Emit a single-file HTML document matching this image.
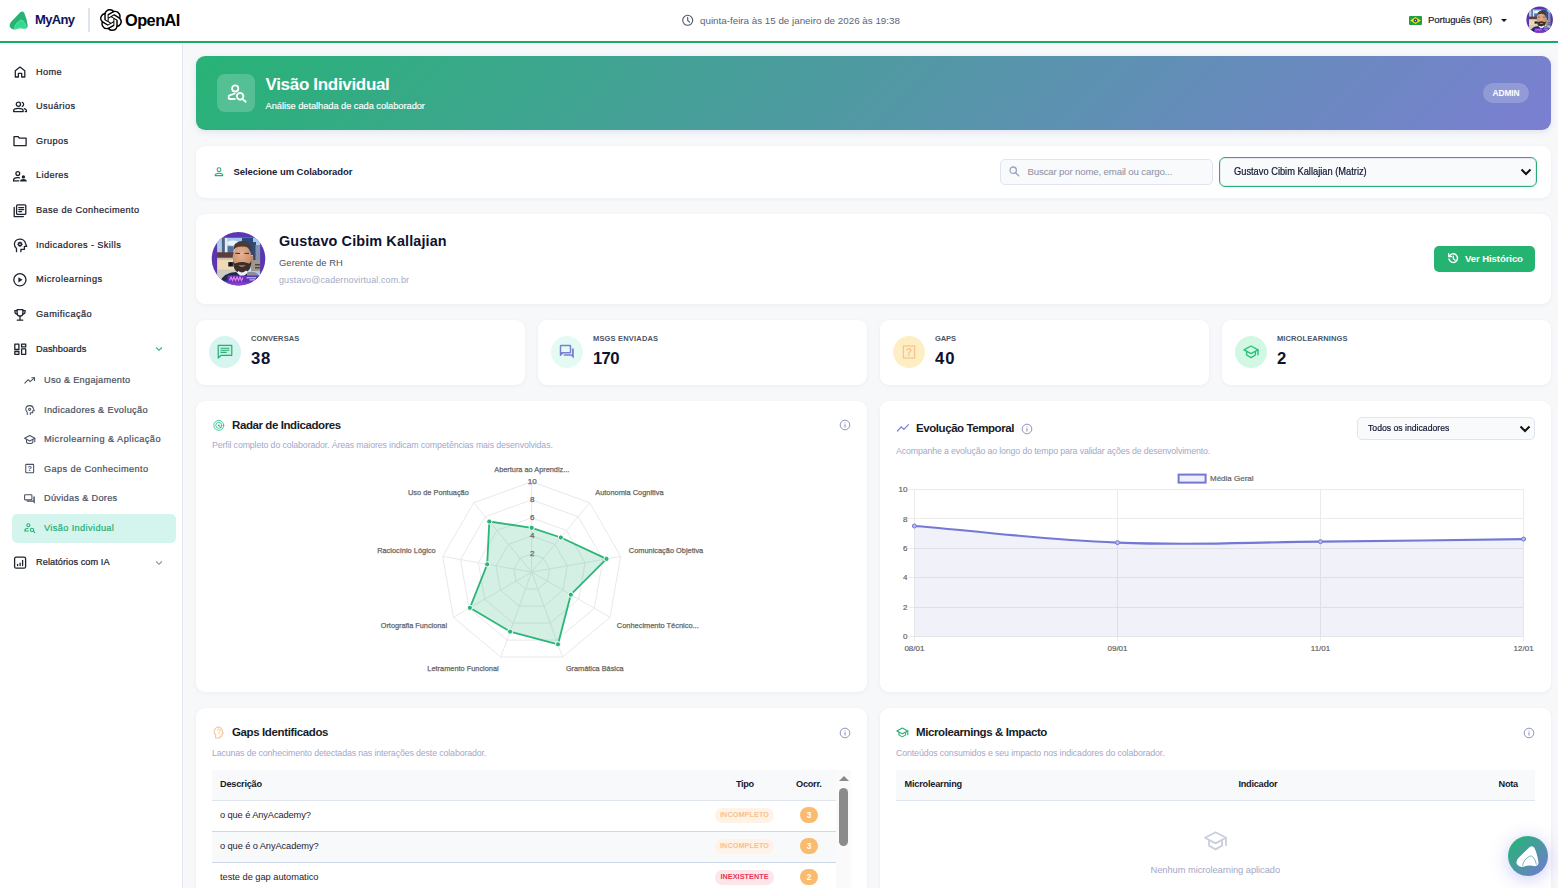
<!DOCTYPE html>
<html lang="pt-BR">
<head>
<meta charset="utf-8">
<title>Visão Individual</title>
<style>
*{box-sizing:border-box;margin:0;padding:0}
html,body{width:1558px;height:888px;overflow:hidden}
body{font-family:"Liberation Sans",sans-serif;background:#f7f8fa;color:#1e2330;position:relative;font-size:11px}
.abs{position:absolute}
/* top bar */
#topbar{position:absolute;z-index:2;left:0;top:0;width:1558px;height:44px;background:#fff;box-shadow:inset 0 -1px 0 #fff,inset 0 -3px 0 #14ad64}
/* sidebar */
#sidebar{position:absolute;left:0;top:43px;width:183px;height:845px;background:#fff;border-right:1px solid #e3e7ef}
.nav{position:absolute;left:0;width:182px;height:20px}
.nav svg{position:absolute}
.nav span{position:absolute;left:36px;top:-.5px;line-height:20px;font-size:9.200px;color:#1e2330;white-space:nowrap;letter-spacing:.4px;-webkit-text-stroke-width:.22px}
.nav.sub span{left:44px;color:#4b5262}
.card{position:absolute;background:#fff;border-radius:9px;box-shadow:0 1px 4px rgba(30,40,80,.05)}
.ctitle{position:absolute;font-weight:bold;font-size:12.3px;color:#171c28;white-space:nowrap}
.csub{position:absolute;font-size:8.6px;color:#a3a7cc;white-space:nowrap}
</style>
</head>
<body>
<div id="topbar">
  <!-- MyAny logo -->
  <svg class="abs" style="left:6px;top:6px" width="30" height="30" viewBox="0 0 30 30">
    <path d="M14.3 6.3 Q16.6 4.3 18.3 6.9 Q20.6 11.8 21.7 19.6 Q21.9 22.6 18.6 23 Q14.4 21.4 10 23.3 Q6.4 24.4 4.2 21.6 Q2.7 18.9 5.2 15.8 Z" fill="#27b374"/>
    <path d="M8.4 21.7 Q9.6 17 14.4 14.2 Q16 13.6 17.3 15 Q19.6 17.8 20 20.6 Q19.9 22.7 18 22.7 Q14.4 21.2 10.2 23 Q8.2 23.3 8.4 21.7 Z" fill="#2edc8c" stroke="#9eeccb" stroke-width=".5"/>
  </svg>
  <div class="abs" style="left:35px;top:12px;font-size:13px;line-height:16px;font-weight:bold;color:#0f0f5e;letter-spacing:-.65px">MyAny</div>
  <div class="abs" style="left:88px;top:8px;width:2px;height:24px;background:#dde4f0"></div>
  <!-- OpenAI -->
  <svg class="abs" style="left:100px;top:9px" width="22" height="22" viewBox="0 0 24 24"><path fill="#000" d="M22.2819 9.8211a5.9847 5.9847 0 0 0-.5157-4.9108 6.0462 6.0462 0 0 0-6.5098-2.9A6.0651 6.0651 0 0 0 4.9807 4.1818a5.9847 5.9847 0 0 0-3.9977 2.9 6.0462 6.0462 0 0 0 .7427 7.0966 5.98 5.98 0 0 0 .511 4.9107 6.051 6.051 0 0 0 6.5146 2.9001A5.9847 5.9847 0 0 0 13.2599 24a6.0557 6.0557 0 0 0 5.7718-4.2058 5.9894 5.9894 0 0 0 3.9977-2.9001 6.0557 6.0557 0 0 0-.7475-7.0729zm-9.022 12.6081a4.4755 4.4755 0 0 1-2.8764-1.0408l.1419-.0804 4.7783-2.7582a.7948.7948 0 0 0 .3927-.6813v-6.7369l2.02 1.1686a.071.071 0 0 1 .038.052v5.5826a4.504 4.504 0 0 1-4.4945 4.4944zm-9.6607-4.1254a4.4708 4.4708 0 0 1-.5346-3.0137l.142.0852 4.783 2.7582a.7712.7712 0 0 0 .7806 0l5.8428-3.3685v2.3324a.0804.0804 0 0 1-.0332.0615L9.74 19.9502a4.4992 4.4992 0 0 1-6.1408-1.6464zM2.3408 7.8956a4.485 4.485 0 0 1 2.3655-1.9728V11.6a.7664.7664 0 0 0 .3879.6765l5.8144 3.3543-2.0201 1.1685a.0757.0757 0 0 1-.071 0l-4.8303-2.7865A4.504 4.504 0 0 1 2.3408 7.872zm16.5963 3.8558L13.1038 8.364 15.1192 7.2a.0757.0757 0 0 1 .071 0l4.8303 2.7913a4.4944 4.4944 0 0 1-.6765 8.1042v-5.6772a.79.79 0 0 0-.407-.667zm2.0107-3.0231l-.142-.0852-4.7735-2.7818a.7759.7759 0 0 0-.7854 0L9.409 9.2297V6.8974a.0662.0662 0 0 1 .0284-.0615l4.8303-2.7866a4.4992 4.4992 0 0 1 6.6802 4.66zM8.3065 12.863l-2.02-1.1638a.0804.0804 0 0 1-.038-.0567V6.0742a4.4992 4.4992 0 0 1 7.3757-3.4537l-.142.0805L8.704 5.459a.7948.7948 0 0 0-.3927.6813zm1.0976-2.3654l2.602-1.4998 2.6069 1.4998v2.9994l-2.5974 1.4997-2.6067-1.4997Z"/></svg>
  <div class="abs" style="left:125px;top:10px;font-size:16.3px;line-height:20px;font-weight:bold;color:#000;letter-spacing:-.5px">OpenAI</div>
  <!-- clock + date -->
  <svg class="abs" style="left:681px;top:14px" width="13" height="13" viewBox="0 0 13 13" fill="none" stroke="#4b5567" stroke-width="1.1" stroke-linecap="round"><circle cx="6.7" cy="6.3" r="5"/><path d="M6.7 3.4V6.5L8.6 8.2"/></svg>
  <div class="abs" style="left:700px;top:13.600px;font-size:9.800px;line-height:13px;color:#5b6577;letter-spacing:0;white-space:nowrap">quinta-feira às 15 de janeiro de 2026 às 19:38</div>
  <!-- flag -->
  <svg class="abs" style="left:1409px;top:16px" width="13" height="9" viewBox="0 0 13 9"><rect width="13" height="9" rx="1" fill="#229e45"/><path d="M6.5 1 L11.8 4.5 L6.5 8 L1.2 4.5Z" fill="#f8e509"/><circle cx="6.5" cy="4.5" r="1.9" fill="#2b49a3"/><circle cx="6.5" cy="4.5" r=".6" fill="#fff"/></svg>
  <div class="abs" style="left:1428px;top:12.500px;font-size:9.600px;line-height:13px;color:#1a1f36;letter-spacing:-.15px;-webkit-text-stroke-width:.2px;white-space:nowrap">Português (BR)</div>
  <svg class="abs" style="left:1501px;top:18.5px" width="6" height="3" viewBox="0 0 6 3"><path d="M0 0H6L3 3Z" fill="#111"/></svg>
  <!-- avatar -->
  <svg class="abs" style="left:1526.400px;top:5.700px" width="27.800" height="27.800" viewBox="0 0 56 56"><use href="#avg"/></svg>
</div>
<div id="sidebar">
<div class="nav" style="top:19px"><svg viewBox="0 0 16 16" style="left:12px;top:2px;width:16px;height:16px"><path fill="none" stroke="#1e2330" stroke-width="1.3" stroke-linejoin="round" stroke-linecap="round" d="M3.3 13V6.8L8 3.1L12.8 6.8V13H9.7V9.3H6.4V13Z"/></svg><span style="letter-spacing:0.379px">Home</span></div>
<div class="nav" style="top:53.5px"><svg viewBox="0 0 16 16" style="left:12px;top:2px;width:16px;height:16px"><g fill="none" stroke="#1e2330" stroke-width="1.3" stroke-linejoin="round" stroke-linecap="round"><circle cx="6.4" cy="5.3" r="2.1"/><path d="M1.6 12.6v-.7c0-1.7 2.6-2.6 4.8-2.6s4.8.9 4.8 2.6v.7z"/><path d="M10.2 3.3a2.1 2.1 0 0 1 0 4"/><path d="M12.3 9.7c1.3.4 2.2 1.1 2.2 2.2v.7h-1.2"/></g></svg><span style="letter-spacing:0.405px">Usuários</span></div>
<div class="nav" style="top:88px"><svg viewBox="0 0 16 16" style="left:12px;top:2px;width:16px;height:16px"><path fill="none" stroke="#1e2330" stroke-width="1.3" stroke-linejoin="round" stroke-linecap="round" d="M2 3.7h4.2l1.4 1.5h6.5v7.4H2z"/></svg><span style="letter-spacing:0.372px">Grupos</span></div>
<div class="nav" style="top:122.5px"><svg viewBox="0 0 16 16" style="left:12px;top:2px;width:16px;height:16px"><g fill="none" stroke="#1e2330" stroke-width="1.3" stroke-linejoin="round" stroke-linecap="round"><circle cx="5.8" cy="5.6" r="1.9"/><path d="M1.6 12.8v-.8c0-1.6 2.2-2.4 4.2-2.4 .6 0 1.2.1 1.7.2"/><path d="M1.6 12.8h5.2"/></g><circle cx="11.4" cy="8.9" r="1.7" fill="#1e2330"/><path d="M8 13.4c0-1.6 1.6-2.4 3.4-2.4s3.4.8 3.4 2.4z" fill="#1e2330"/></svg><span style="letter-spacing:0.377px">Lideres</span></div>
<div class="nav" style="top:157.5px"><svg viewBox="0 0 16 16" style="left:12px;top:2px;width:16px;height:16px"><g fill="none" stroke="#1e2330" stroke-width="1.3" stroke-linejoin="round" stroke-linecap="round"><rect x="4.6" y="1.8" width="9.2" height="9.6" rx="1"/><path d="M6.8 4.6h4.8M6.8 6.6h4.8M6.8 8.6h2.8"/><path d="M2.2 4.4v9.2h9.2"/></g></svg><span style="letter-spacing:0.394px">Base de Conhecimento</span></div>
<div class="nav" style="top:192px"><svg viewBox="0 0 16 16" style="left:12px;top:2px;width:16px;height:16px"><g fill="none" stroke="#1e2330" stroke-width="1.3" stroke-linejoin="round" stroke-linecap="round"><path d="M4.500 14.700V11.400C3.200 10.300 2.400 8.700 2.400 7A5.600 5.300 0 0 1 13.500 6.400L14.700 9.300H12.400V12.300H8.900V14.700"/><circle cx="8" cy="7.300" r="1.500" stroke-width="1.400"/><path d="M8 4.900v.7M8 9v.7M5.600 7.300h.7M9.700 7.300h.7M6.300 5.600l.5.500M9.200 8.500l.5.500M9.700 5.600l-.5.500M6.800 8.500l-.5.500" stroke-width=".9"/></g></svg><span style="letter-spacing:0.405px">Indicadores - Skills</span></div>
<div class="nav" style="top:226.5px"><svg viewBox="0 0 16 16" style="left:12px;top:2px;width:16px;height:16px"><circle cx="7.9" cy="7.8" r="6.1" fill="none" stroke="#1e2330" stroke-width="1.3" stroke-linejoin="round" stroke-linecap="round"/><path d="M6.4 5.2L10.6 7.8L6.4 10.4z" fill="#1e2330"/></svg><span style="letter-spacing:0.489px">Microlearnings</span></div>
<div class="nav" style="top:261.5px"><svg viewBox="0 0 16 16" style="left:12px;top:2px;width:16px;height:16px"><g fill="none" stroke="#1e2330" stroke-width="1.3" stroke-linejoin="round" stroke-linecap="round"><path d="M5.1 2.6h5.8v3.6a2.9 2.9 0 0 1-5.800 0z"/><path d="M5.1 3.600H2.900v1.200a2.200 2.200 0 0 0 2.400 2.200"/><path d="M10.900 3.600h2.200v1.200a2.200 2.200 0 0 1-2.400 2.200"/><path d="M8 9.2v3.400"/><path d="M5.300 13.200h5.400"/></g></svg><span style="letter-spacing:0.464px">Gamificação</span></div>
<div class="nav" style="top:296px"><svg viewBox="0 0 16 16" style="left:12px;top:2px;width:16px;height:16px"><g fill="none" stroke="#1e2330" stroke-width="1.3" stroke-linejoin="round" stroke-linecap="round" stroke-linejoin="miter"><rect x="2.800" y="3.100" width="4.100" height="5.400"/><rect x="9.600" y="3.100" width="4.100" height="2.800"/><rect x="2.800" y="10.500" width="4.100" height="2.800"/><rect x="9.600" y="7.900" width="4.100" height="5.400"/></g></svg><span style="letter-spacing:0.078px">Dashboards</span></div>
<svg class="abs" style="left:155px;top:303px" width="8" height="6" viewBox="0 0 8 6"><path d="M1.200 1.500L4 4.300L6.800 1.500" fill="none" stroke="#27ae74" stroke-width="1.100"/></svg>
<div class="abs" style="left:12px;top:471px;width:164px;height:29px;border-radius:5px;background:#d4f5ee"></div>
<div class="nav sub" style="top:327.5px"><svg viewBox="0 0 16 16" style="left:21.900px;top:2.200px;width:15.400px;height:15.400px"><path fill="none" stroke="#4b5262" stroke-width="1.1" stroke-linejoin="round" stroke-linecap="round" d="M3 10.500L6.500 7L8.500 9L12.800 5"/><path fill="none" stroke="#4b5262" stroke-width="1.1" stroke-linejoin="round" stroke-linecap="round" d="M10.200 5h2.800v2.800"/></svg><span style="letter-spacing:0.274px">Uso & Engajamento</span></div>
<div class="nav sub" style="top:357px"><svg viewBox="0 0 16 16" style="left:21.900px;top:2.200px;width:15.400px;height:15.400px"><g fill="none" stroke="#4b5262" stroke-width="1.1" stroke-linejoin="round" stroke-linecap="round" transform="translate(2.200 2.300) scale(.72)"><path d="M4.500 14.700V11.400C3.200 10.300 2.400 8.700 2.400 7A5.600 5.300 0 0 1 13.500 6.400L14.700 9.300H12.400V12.300H8.900V14.700" stroke-width="1.500"/><circle cx="8" cy="7.300" r="1.600" stroke-width="1.500"/></g></svg><span style="letter-spacing:0.336px">Indicadores & Evolução</span></div>
<div class="nav sub" style="top:386.5px"><svg viewBox="0 0 16 16" style="left:21.900px;top:2.200px;width:15.400px;height:15.400px"><g fill="none" stroke="#4b5262" stroke-width="1.1" stroke-linejoin="round" stroke-linecap="round"><path d="M8 3.700L2.700 6.500L8 9.300L13.300 6.500z"/><path d="M4.700 7.800v2.500c0 1 1.600 1.700 3.300 1.700s3.300-.7 3.300-1.700V7.800"/><path d="M13.300 6.500v3.600"/></g></svg><span style="letter-spacing:0.449px">Microlearning & Aplicação</span></div>
<div class="nav sub" style="top:416px"><svg viewBox="0 0 16 16" style="left:21.900px;top:2.200px;width:15.400px;height:15.400px"><g fill="none" stroke="#4b5262" stroke-width="1.1" stroke-linejoin="round" stroke-linecap="round"><rect x="3.900" y="3.500" width="8.200" height="8.800" rx=".6"/></g><text x="8" y="10.900" font-size="7.600" font-family="Liberation Sans" font-weight="bold" text-anchor="middle" fill="#4b5262">?</text></svg><span style="letter-spacing:0.393px">Gaps de Conhecimento</span></div>
<div class="nav sub" style="top:445.5px"><svg viewBox="0 0 16 16" style="left:21.900px;top:2.200px;width:15.400px;height:15.400px"><g fill="none" stroke="#4b5262" stroke-width="1.1" stroke-linejoin="round" stroke-linecap="round"><rect x="2.700" y="3.800" width="7.600" height="5.400" rx=".5"/></g><path d="M11.800 5.600h1.500v7.600l-2-2H5v-1.300h6.800z" fill="#4b5262"/></svg><span style="letter-spacing:0.304px">Dúvidas & Dores</span></div>
<div class="nav sub" style="top:475px"><svg viewBox="0 0 16 16" style="left:21.900px;top:2.200px;width:15.400px;height:15.400px"><g fill="none" stroke="#27ae74" stroke-width="1.1" stroke-linejoin="round" stroke-linecap="round"><circle cx="6.600" cy="5.400" r="1.600"/><path d="M6.200 8.900c-1.800 0-3.300.7-3.300 2v.6h3.600"/><circle cx="10.400" cy="10.300" r="1.700"/><path d="M11.700 11.600l1.600 1.600"/></g></svg><span style="letter-spacing:0.381px;color:#27ae74">Visão Individual</span></div>
<div class="nav" style="top:509.5px"><svg viewBox="0 0 16 16" style="left:12px;top:2px;width:16px;height:16px"><g fill="none" stroke="#1e2330" stroke-width="1.3" stroke-linejoin="round" stroke-linecap="round"><rect x="2.600" y="2.200" width="11" height="11" rx="1.500"/><path d="M5.600 10.500v-1.200M8.100 10.500v-2.400M10.600 10.500v-5.200"/></g></svg><span style="letter-spacing:0.068px">Relatórios com IA</span></div>
<svg class="abs" style="left:155px;top:516.5px" width="8" height="6" viewBox="0 0 8 6"><path d="M1.200 1.500L4 4.300L6.800 1.500" fill="none" stroke="#8a90a0" stroke-width="1.100"/></svg>
</div>

<!-- hero -->
<div class="abs" id="hero" style="left:196px;top:56px;width:1355px;height:74px;border-radius:9px;background:linear-gradient(135deg,#27b376 0%,#7b7fd2 100%);box-shadow:0 2px 6px rgba(60,80,160,.12)">
  <div class="abs" style="left:21px;top:18px;width:38px;height:38px;border-radius:8px;background:rgba(255,255,255,.2)"></div>
  <svg class="abs" style="left:29px;top:26px" width="24" height="24" viewBox="0 0 24 24" fill="none" stroke="#fff" stroke-width="1.800" stroke-linecap="round" stroke-linejoin="round"><circle cx="10.200" cy="6.400" r="3.100"/><path d="M9.800 11.500L4 13.600Q3.200 15.600 4.200 17H9.800"/><circle cx="15.100" cy="14.300" r="3.300"/><path d="M17.700 17.200l3 2.500"/></svg>
  <div class="abs" style="left:69.500px;top:17px;font-size:17px;line-height:24px;font-weight:bold;color:#fff;white-space:nowrap;letter-spacing:-.32px">Visão Individual</div>
  <div class="abs" style="left:69.500px;top:43.500px;font-size:9.300px;line-height:12px;color:#fff;white-space:nowrap;letter-spacing:-.05px;-webkit-text-stroke-width:.15px">Análise detalhada de cada colaborador</div>
  <div class="abs" style="left:1287px;top:27px;width:46px;height:20px;border-radius:10px;background:rgba(255,255,255,.2);color:#fff;font-weight:bold;font-size:8.400px;line-height:20px;text-align:center;letter-spacing:-.05px">ADMIN</div>
</div>

<!-- selector card -->
<div class="card" style="left:196px;top:146px;width:1355px;height:52px">
  <svg class="abs" style="left:17px;top:20px" width="12" height="12" viewBox="0 0 12 12" fill="none" stroke="#27ae74" stroke-width="1.100"><circle cx="6" cy="3.700" r="1.900"/><path d="M2.200 9.600c0-1.600 1.900-2.300 3.800-2.300s3.800.7 3.800 2.300z" stroke-linejoin="round"/></svg>
  <div class="abs" style="left:37.500px;top:19px;font-size:9.500px;line-height:14px;font-weight:bold;color:#1b2035;white-space:nowrap;letter-spacing:-.06px">Selecione um Colaborador</div>
  <div class="abs" style="left:804px;top:13px;width:213px;height:26px;border:1px solid #dfe5f0;border-radius:5px;background:#f8fafc"></div>
  <svg class="abs" style="left:812px;top:19px" width="13" height="13" viewBox="0 0 13 13" fill="none" stroke="#9aa3c2" stroke-width="1.300" stroke-linecap="round"><circle cx="5.200" cy="5.200" r="3.200"/><path d="M7.700 7.700l3 3"/></svg>
  <div class="abs" style="left:831.500px;top:19px;font-size:9.700px;line-height:14px;color:#8b8f9f;white-space:nowrap;letter-spacing:-.18px">Buscar por nome, email ou cargo...</div>
  <div class="abs" style="left:1023px;top:11px;width:318px;height:30px;border:1.500px solid #27ae74;border-radius:6px;background:#f8fafc;box-shadow:inset 0 0 0 1px #e4e9f2"></div>
  <div class="abs" style="left:1037.500px;top:19.100px;font-size:10.200px;line-height:14px;color:#10142e;white-space:nowrap;transform:scaleX(.912);transform-origin:0 50%;-webkit-text-stroke-width:.2px">Gustavo Cibim Kallajian (Matriz)</div>
  <svg class="abs" style="left:1324px;top:22px" width="12" height="8" viewBox="0 0 12 8"><path d="M1.500 1.500L6 6L10.500 1.500" fill="none" stroke="#111" stroke-width="2"/></svg>
</div>
<!-- profile card -->
<div class="card" style="left:196px;top:214px;width:1355px;height:90px">
  <svg class="abs" style="left:15px;top:17px" width="56" height="56" viewBox="0 0 56 56">
    <defs><clipPath id="pfc"><circle cx="27.500" cy="27.800" r="26.800"/></clipPath><clipPath id="pfi"><rect x="6.100" y="6.800" width="43" height="43"/></clipPath><filter id="pfb" x="-5%" y="-5%" width="110%" height="110%"><feGaussianBlur stdDeviation=".55"/></filter>
    <linearGradient id="pfs" x1="0" y1="0" x2="0" y2="1"><stop offset="0" stop-color="#9fc6f0"/><stop offset="1" stop-color="#dbe8f6"/></linearGradient>
    <linearGradient id="pfp" x1="0" y1="0" x2="0" y2="1"><stop offset="0" stop-color="#6a38be"/><stop offset="1" stop-color="#9c52dc"/></linearGradient>
    <radialGradient id="pff" cx=".45" cy=".35" r=".7"><stop offset="0" stop-color="#e6b292"/><stop offset="1" stop-color="#c48866"/></radialGradient></defs>
    <g clip-path="url(#pfc)" id="avg">
      <rect width="56" height="56" fill="#5b36b2"/>
      <g clip-path="url(#pfi)"><g filter="url(#pfb)">
        <rect x="5" y="5" width="46" height="46" fill="url(#pfs)"/>
        <ellipse cx="22" cy="12" rx="6" ry="2.500" fill="#eef4fb"/>
        <rect x="10.900" y="7" width="3" height="16" fill="#4d6486"/>
        <rect x="13.900" y="7" width="2.400" height="15" fill="#e4ebf2"/>
        <rect x="16.600" y="15.200" width="5.600" height="8" fill="#50709a"/>
        <rect x="6" y="17" width="4" height="6" fill="#b8c4d2"/>
        <rect x="31" y="7" width="11" height="17" fill="#2c4a7c"/>
        <rect x="42" y="11" width="3" height="18" fill="#3a4a66"/>
        <rect x="44.500" y="14" width="5" height="16" fill="#7f93b4"/>
        <rect x="5" y="21.300" width="18" height="5.600" fill="#5b3d3a"/>
        <rect x="5" y="26.800" width="18" height="2.200" fill="#cbbfae"/>
        <rect x="5" y="28.800" width="18" height="10.400" fill="#f0d9b4"/>
        <rect x="17.300" y="31.100" width="4.600" height="4.400" fill="#10141c"/>
        <rect x="5" y="38.500" width="22" height="12" fill="#cfcac0"/>
        <rect x="40" y="29" width="10" height="12" fill="#9d978d"/>
        <rect x="44" y="33" width="5" height="1.500" fill="#4a4a50"/><rect x="44" y="36" width="5" height="1.500" fill="#4a4a50"/>
        <rect x="40" y="40" width="10" height="3" fill="#a8c8e8"/>
        <ellipse cx="31.100" cy="26.700" rx="9.400" ry="12.400" fill="url(#pff)"/>
        <ellipse cx="41" cy="27" rx="1.300" ry="2.600" fill="#c48866"/>
        <path d="M22.300 20 Q22 10.500 31.500 9.800 Q41 10 40.600 21 Q39 15.500 31 15.600 Q24 15.600 22.300 20Z" fill="#4b3a30"/>
        <path d="M24.500 22.400h4.500M33.500 22.400h4.500" stroke="#3a2c26" stroke-width="1"/>
        <path d="M22 29 Q22.500 33.500 25.500 32 Q31 29.800 36.500 32 Q39.500 33.500 40.300 29 Q41 41 31 42.500 Q21.500 41.500 22 29Z" fill="#3b2e28"/>
        <path d="M27 34 Q31 37.500 35 34 Q31 35 27 34Z" fill="#e8a0a0"/>
        <path d="M8 52 Q13 41 25 41 L31 46 L38 41 Q47 41 50 52Z" fill="#1f2b4c"/>
        <path d="M36 41 Q44 39.500 48 44 L48 47 L36 47Z" fill="#8b8c96"/>
        <path d="M26 41.500 L31 46.500 L37 41 L35 39.500 Q31 43 27.500 40Z" fill="#eef0f6"/>
      </g></g>
      <rect x="16.500" y="44.500" width="34" height="7" fill="#5b36b8"/>
      <rect x="0" y="50.500" width="56" height="6" fill="url(#pfp)"/>
      <path d="M18.500 49.500l1.500-3.500 1.500 3.500 1.500-3.500 1.500 3.500 1.500-3.500 1.500 3.500 1.500-3.500 1.500 3.500 1.500-3" stroke="#f07be8" stroke-width="1.200" fill="none"/>
      <path d="M35.500 46.800h9.500M38.500 48.900h6" stroke="#efe6ff" stroke-width=".9"/>
    </g>
  </svg>
  <div class="abs" style="left:83px;top:17px;font-size:14.400px;line-height:20px;font-weight:bold;color:#0e1230;white-space:nowrap;letter-spacing:.13px">Gustavo Cibim Kallajian</div>
  <div class="abs" style="left:83px;top:42px;font-size:9.400px;line-height:13px;color:#4a5162;white-space:nowrap;letter-spacing:.06px">Gerente de RH</div>
  <div class="abs" style="left:83px;top:59.500px;font-size:9px;line-height:13px;color:#a6aac6;white-space:nowrap;letter-spacing:.1px">gustavo@cadernovirtual.com.br</div>
  <div class="abs" style="left:1238px;top:32px;width:101px;height:26px;border-radius:5px;background:#25b372"></div>
  <svg class="abs" style="left:1251px;top:38px" width="13" height="13" viewBox="0 0 13 13" fill="none" stroke="#fff" stroke-width="1.400" stroke-linecap="round" stroke-linejoin="round"><path d="M2.300 4.300A4.300 4.300 0 1 1 2 7"/><path d="M1.700 1.800v2.700h2.700"/><path d="M6.300 4.300v2.300l1.600 1.400"/></svg>
  <div class="abs" style="left:1269px;top:38px;font-size:9.600px;line-height:14px;font-weight:bold;color:#fff;white-space:nowrap;letter-spacing:-.1px">Ver Histórico</div>
</div>
<!-- stats -->
<div class="card" style="left:196px;top:320px;width:329px;height:65px">
  <div class="abs" style="left:13px;top:16px;width:32px;height:32px;border-radius:16px;background:#d6f5ef"></div>
  <svg class="abs" style="left:19px;top:22px" width="20" height="20" viewBox="0 0 20 20"><path d="M3.200 3.300h13.600v10H6.200L3.200 16z" fill="#c9f0e4" stroke="#27ae74" stroke-width="1.200" stroke-linejoin="round"/><path d="M5.600 6.200h8.800M5.600 8.300h8.800M5.600 10.400h6" stroke="#27ae74" stroke-width="1.100"/></svg>
  <div class="abs" style="left:55px;top:14px;font-size:7.500px;line-height:10px;font-weight:bold;color:#4b5568;white-space:nowrap;letter-spacing:0.09px">CONVERSAS</div>
  <div class="abs" style="left:55px;top:29.200px;font-size:16.700px;line-height:20px;font-weight:bold;color:#0e1230;white-space:nowrap;letter-spacing:0.6px">38</div>
</div>
<div class="card" style="left:538px;top:320px;width:329px;height:65px">
  <div class="abs" style="left:13px;top:16px;width:32px;height:32px;border-radius:16px;background:#e3fbf4"></div>
  <svg class="abs" style="left:19px;top:22px" width="20" height="20" viewBox="0 0 20 20"><g fill="none" stroke="#7b7fd2" stroke-width="1.500" stroke-linejoin="round"><rect x="3.500" y="3.600" width="10" height="7.200" rx=".6"/><path d="M3.500 10.800v2.400l2.400-2.400"/></g><path d="M15 6.500h1.800v10l-2.800-2.700H6.800v-1.500h8.200z" fill="#7b7fd2"/></svg>
  <div class="abs" style="left:55px;top:14px;font-size:7.500px;line-height:10px;font-weight:bold;color:#4b5568;white-space:nowrap;letter-spacing:0.18px">MSGS ENVIADAS</div>
  <div class="abs" style="left:55px;top:29.200px;font-size:16.700px;line-height:20px;font-weight:bold;color:#0e1230;white-space:nowrap;letter-spacing:-0.7px">170</div>
</div>
<div class="card" style="left:880px;top:320px;width:329px;height:65px">
  <div class="abs" style="left:13px;top:16px;width:32px;height:32px;border-radius:16px;background:#fdeec4"></div>
  <svg class="abs" style="left:19px;top:22px" width="20" height="20" viewBox="0 0 20 20"><rect x="4.400" y="4" width="11.200" height="12" fill="none" stroke="#f7c58f" stroke-width="1.300"/><text x="10" y="13.600" font-size="10.500" font-family="Liberation Sans" font-weight="bold" text-anchor="middle" fill="#f7c58f">?</text></svg>
  <div class="abs" style="left:55px;top:14px;font-size:7.500px;line-height:10px;font-weight:bold;color:#4b5568;white-space:nowrap;letter-spacing:-0.09px">GAPS</div>
  <div class="abs" style="left:55px;top:29.200px;font-size:16.700px;line-height:20px;font-weight:bold;color:#0e1230;white-space:nowrap;letter-spacing:1px">40</div>
</div>
<div class="card" style="left:1222px;top:320px;width:329px;height:65px">
  <div class="abs" style="left:13px;top:16px;width:32px;height:32px;border-radius:16px;background:#d2f7e2"></div>
  <svg class="abs" style="left:19px;top:22px" width="20" height="20" viewBox="0 0 20 20"><g fill="none" stroke="#27c07c" stroke-width="1.400" stroke-linejoin="round" stroke-linecap="round"><path d="M10 4L3 7.800L10 11.600L17 7.800z"/><path d="M5.600 9.400v3.600L10 15.600l4.400-2.600V9.400"/><path d="M17 7.800v5"/></g></svg>
  <div class="abs" style="left:55px;top:14px;font-size:7.500px;line-height:10px;font-weight:bold;color:#4b5568;white-space:nowrap;letter-spacing:0.1px">MICROLEARNINGS</div>
  <div class="abs" style="left:55px;top:29.200px;font-size:16.700px;line-height:20px;font-weight:bold;color:#0e1230;white-space:nowrap;letter-spacing:0px">2</div>
</div>
<!-- charts -->
<div class="card" style="left:196px;top:401px;width:671px;height:291px">
  <svg class="abs" style="left:15px;top:17px" width="15" height="15" viewBox="0 0 15 15" fill="none" stroke="#2bbf8a" stroke-width=".85" stroke-linecap="round"><circle cx="7.800" cy="7.400" r="4.950"/><circle cx="7.800" cy="7.400" r="3"/><circle cx="7.800" cy="7.400" r=".9" fill="#27ae74" stroke="none"/><path d="M7.800 7.400L10.200 9.800" stroke="#27ae74"/></svg>
  <div class="ctitle" style="left:36px;top:17px;font-size:11.500px;line-height:15px;letter-spacing:-.41px">Radar de Indicadores</div>
  <svg class="abs" style="left:643px;top:18px" width="12" height="12" viewBox="0 0 12 12" fill="none" stroke="#8288b8" stroke-width=".9"><circle cx="6" cy="6" r="4.800"/><path d="M6 5.300v3.200M6 3.500v.8" stroke-width="1"/></svg>
  <div class="csub" style="left:16px;top:37.600px;font-size:8.800px;line-height:12px;letter-spacing:-.126px">Perfil completo do colaborador. Áreas maiores indicam competências mais desenvolvidas.</div>
  <svg class="abs" style="left:0;top:0" width="671" height="290" viewBox="0 0 671 290" font-family="Liberation Sans, sans-serif">
    <g fill="none" stroke="#e9e9e9" stroke-width="1"><polygon points="335.7,153.0 347.3,157.2 353.5,168.0 351.4,180.1 341.9,188.1 329.5,188.1 320.0,180.1 317.9,168.0 324.1,157.2"/><polygon points="335.7,134.9 358.9,143.4 371.3,164.8 367.0,189.2 348.1,205.1 323.3,205.1 304.4,189.2 300.1,164.8 312.5,143.4"/><polygon points="335.7,116.9 370.6,129.5 389.1,161.7 382.7,198.2 354.3,222.1 317.1,222.1 288.7,198.2 282.3,161.7 300.8,129.5"/><polygon points="335.7,98.8 382.2,115.7 406.9,158.5 398.3,207.3 360.4,239.1 311.0,239.1 273.1,207.3 264.5,158.5 289.2,115.7"/><polygon points="335.7,80.7 393.8,101.8 424.7,155.4 414.0,216.3 366.6,256.0 304.8,256.0 257.4,216.3 246.7,155.4 277.6,101.8"/><line x1="335.7" y1="171.1" x2="335.7" y2="80.7"/><line x1="335.7" y1="171.1" x2="393.8" y2="101.8"/><line x1="335.7" y1="171.1" x2="424.7" y2="155.4"/><line x1="335.7" y1="171.1" x2="414.0" y2="216.3"/><line x1="335.7" y1="171.1" x2="366.6" y2="256.0"/><line x1="335.7" y1="171.1" x2="304.8" y2="256.0"/><line x1="335.7" y1="171.1" x2="257.4" y2="216.3"/><line x1="335.7" y1="171.1" x2="246.7" y2="155.4"/><line x1="335.7" y1="171.1" x2="277.6" y2="101.8"/></g>
    <polygon points="335.7,126.8 364.8,136.5 410.5,157.9 374.8,193.7 362.0,243.3 314.1,230.6 273.9,206.8 291.2,163.3 293.3,120.5" fill="rgba(39,174,116,.2)" stroke="#2bb678" stroke-width="1.800" stroke-linejoin="round"/>
    <g fill="#2bb678" stroke="#fff" stroke-width="1"><circle cx="335.7" cy="126.8" r="2.600"/><circle cx="364.8" cy="136.5" r="2.600"/><circle cx="410.5" cy="157.9" r="2.600"/><circle cx="374.8" cy="193.7" r="2.600"/><circle cx="362.0" cy="243.3" r="2.600"/><circle cx="314.1" cy="230.6" r="2.600"/><circle cx="273.9" cy="206.8" r="2.600"/><circle cx="291.2" cy="163.3" r="2.600"/><circle cx="293.3" cy="120.5" r="2.600"/></g>
    <g font-size="8" fill="#666" stroke="#666" stroke-width=".25"><text x="336.2" y="155.2" text-anchor="middle">2</text><text x="336.2" y="137.1" text-anchor="middle">4</text><text x="336.2" y="119.1" text-anchor="middle">6</text><text x="336.2" y="101.0" text-anchor="middle">8</text><text x="336.2" y="82.9" text-anchor="middle">10</text></g>
    <g font-size="8" fill="#666" stroke="#666" stroke-width=".25"><text x="335.8" y="70.5" text-anchor="middle" textLength="75.1" lengthAdjust="spacingAndGlyphs">Abertura ao Aprendiz...</text><text x="433.4" y="93.9" text-anchor="middle" textLength="68.3" lengthAdjust="spacingAndGlyphs">Autonomia Cognitiva</text><text x="470.0" y="151.9" text-anchor="middle" textLength="74.4" lengthAdjust="spacingAndGlyphs">Comunicação Objetiva</text><text x="461.8" y="226.7" text-anchor="middle" textLength="81.9" lengthAdjust="spacingAndGlyphs">Conhecimento Técnico...</text><text x="398.8" y="269.7" text-anchor="middle" textLength="57.8" lengthAdjust="spacingAndGlyphs">Gramática Básica</text><text x="267.0" y="269.7" text-anchor="middle" textLength="71.3" lengthAdjust="spacingAndGlyphs">Letramento Funcional</text><text x="217.9" y="226.7" text-anchor="middle" textLength="66.3" lengthAdjust="spacingAndGlyphs">Ortografia Funcional</text><text x="210.4" y="151.9" text-anchor="middle" textLength="58.5" lengthAdjust="spacingAndGlyphs">Raciocínio Lógico</text><text x="242.4" y="93.9" text-anchor="middle" textLength="60.9" lengthAdjust="spacingAndGlyphs">Uso de Pontuação</text></g>
  </svg>
</div>
<div class="card" style="left:880px;top:401px;width:671px;height:291px">
  <svg class="abs" style="left:16px;top:20px" width="14" height="14" viewBox="0 0 14 14" fill="none" stroke="#7b7fd2" stroke-width="1.200" stroke-linecap="round" stroke-linejoin="round"><path d="M1.500 10L5.200 5.800L7.800 8.400L12.500 3.600"/></svg>
  <div class="ctitle" style="left:36px;top:20px;font-size:11.500px;line-height:15px;letter-spacing:-.43px">Evolução Temporal</div>
  <svg class="abs" style="left:141px;top:21.500px" width="12" height="12" viewBox="0 0 12 12" fill="none" stroke="#8288b8" stroke-width=".9"><circle cx="6" cy="6" r="4.800"/><path d="M6 5.300v3.200M6 3.500v.8" stroke-width="1"/></svg>
  <div class="abs" style="left:477px;top:16px;width:178px;height:23px;border:1px solid #dfe5f0;border-radius:5px;background:#f8fafc"></div>
  <div class="abs" style="left:488px;top:19.900px;font-size:9.900px;line-height:14px;color:#10142e;white-space:nowrap;transform:scaleX(.876);transform-origin:0 50%;-webkit-text-stroke-width:.2px">Todos os indicadores</div>
  <svg class="abs" style="left:639px;top:23.500px" width="12" height="8" viewBox="0 0 12 8"><path d="M1.500 1.500L6 6L10.500 1.500" fill="none" stroke="#111" stroke-width="2"/></svg>
  <div class="csub" style="left:16px;top:43.600px;font-size:8.800px;line-height:12px;letter-spacing:-.139px">Acompanhe a evolução ao longo do tempo para validar ações de desenvolvimento.</div>
  <svg class="abs" style="left:0;top:0" width="671" height="290" viewBox="0 0 671 290" font-family="Liberation Sans, sans-serif">
    <g stroke="#ebebeb" stroke-width="1" shape-rendering="crispEdges"><line x1="28.4" y1="235.5" x2="643.6" y2="235.5"/><line x1="28.4" y1="206.0" x2="643.6" y2="206.0"/><line x1="28.4" y1="176.5" x2="643.6" y2="176.5"/><line x1="28.4" y1="147.1" x2="643.6" y2="147.1"/><line x1="28.4" y1="117.6" x2="643.6" y2="117.6"/><line x1="28.4" y1="88.1" x2="643.6" y2="88.1"/><line x1="34.4" y1="88.1" x2="34.4" y2="239.5"/><line x1="237.5" y1="88.1" x2="237.5" y2="239.5"/><line x1="440.5" y1="88.1" x2="440.5" y2="239.5"/><line x1="643.6" y1="88.1" x2="643.6" y2="239.5"/></g>
    <path d="M34.4 125.0 C115.6 131.6 156.1 138.4 237.5 141.6 C318.6 144.8 359.3 141.4 440.5 140.7 C521.7 140.0 562.4 139.1 643.6 138.1 L643.6 235.5 L34.4 235.5Z" fill="rgba(123,127,210,.11)"/>
    <path d="M34.4 125.0 C115.6 131.6 156.1 138.4 237.5 141.6 C318.6 144.8 359.3 141.4 440.5 140.7 C521.7 140.0 562.4 139.1 643.6 138.1" fill="none" stroke="#7478d4" stroke-width="2.200"/>
    <g fill="#b9bbec" stroke="#7478d4" stroke-width="1"><circle cx="34.4" cy="125.0" r="2"/><circle cx="237.5" cy="141.6" r="2"/><circle cx="440.5" cy="140.7" r="2"/><circle cx="643.6" cy="138.1" r="2"/></g>
    <rect x="298.6" y="73.6" width="27" height="8" fill="#eff0fa" stroke="#7478d4" stroke-width="2"/>
    <g font-size="8" fill="#666" stroke="#666" stroke-width=".2"><text x="330.0" y="80.1">Média Geral</text><text x="27.4" y="238.4" text-anchor="end">0</text><text x="27.4" y="208.9" text-anchor="end">2</text><text x="27.4" y="179.4" text-anchor="end">4</text><text x="27.4" y="150.0" text-anchor="end">6</text><text x="27.4" y="120.5" text-anchor="end">8</text><text x="27.4" y="91.0" text-anchor="end">10</text><text x="34.4" y="250.4" text-anchor="middle">08/01</text><text x="237.5" y="250.4" text-anchor="middle">09/01</text><text x="440.5" y="250.4" text-anchor="middle">11/01</text><text x="643.6" y="250.4" text-anchor="middle">12/01</text></g>
  </svg>
</div>
<!-- bottom -->
<div class="card" style="left:196px;top:708px;width:671px;height:200px">
  <svg class="abs" style="left:15px;top:17px" width="15" height="15" viewBox="0 0 15 15" fill="none" stroke="#f9c493" stroke-width="1.100" stroke-linecap="round" stroke-linejoin="round"><path d="M8 2a4.800 4.800 0 0 0-4.900 4.700c0 1.400.6 2.500 1.500 3.300V13h4.300v-1.700h1.300a.8.8 0 0 0 .8-.8V8.800l1.300-.4L11.200 6.300A4.200 4.200 0 0 0 8 2z"/><path d="M6.600 5.300a1.400 1.400 0 1 1 2 1.300c-.4.200-.6.500-.6 1M8 9.100v.2" stroke-width="1"/></svg>
  <div class="ctitle" style="left:36px;top:17px;font-size:11.500px;line-height:15px;letter-spacing:-.38px">Gaps Identificados</div>
  <svg class="abs" style="left:643px;top:19px" width="12" height="12" viewBox="0 0 12 12" fill="none" stroke="#8288b8" stroke-width=".9"><circle cx="6" cy="6" r="4.800"/><path d="M6 5.300v3.200M6 3.500v.8" stroke-width="1"/></svg>
  <div class="csub" style="left:16px;top:38.600px;font-size:8.800px;line-height:12px;letter-spacing:-.125px">Lacunas de conhecimento detectadas nas interações deste colaborador.</div>
  <div class="abs" style="left:16px;top:62px;width:639px;height:31px;background:#f8f9fb"></div>
  <div class="abs" style="left:16px;top:92px;width:624px;height:1px;background:#dfe6f0"></div>
  <div class="abs" style="left:24px;top:68.500px;font-size:9.200px;line-height:14px;font-weight:bold;color:#161a2c;white-space:nowrap;letter-spacing:-.23px">Descrição</div>
  <div class="abs" style="left:540px;top:68.500px;font-size:9.200px;line-height:14px;font-weight:bold;color:#161a2c;white-space:nowrap;letter-spacing:-.4px">Tipo</div>
  <div class="abs" style="left:600px;top:68.500px;font-size:9.200px;line-height:14px;font-weight:bold;color:#161a2c;white-space:nowrap;letter-spacing:-.25px">Ocorr.</div>
  <div class="abs" style="left:16px;top:93px;width:624px;height:31px;background:#fff;border-bottom:1px solid #cdd7e7"></div>
  <div class="abs" style="left:24px;top:100px;font-size:9.300px;line-height:14px;color:#1f2230;white-space:nowrap;letter-spacing:-0.118px">o que é AnyAcademy?</div>
  <div class="abs" style="left:519px;top:100px;width:59px;height:14.500px;border-radius:7.250px;background:#fff3e8;color:#fbc08a;font-size:7.200px;line-height:14.500px;font-weight:bold;text-align:center;letter-spacing:0.13px">INCOMPLETO</div>
  <div class="abs" style="left:604px;top:99px;width:18px;height:16px;border-radius:8px;background:#fbbb6e;color:#fff;font-size:8.400px;line-height:16px;font-weight:bold;text-align:center">3</div>
  <div class="abs" style="left:16px;top:124px;width:624px;height:31px;background:#f8f9fb;border-bottom:1px solid #cdd7e7"></div>
  <div class="abs" style="left:24px;top:131px;font-size:9.300px;line-height:14px;color:#1f2230;white-space:nowrap;letter-spacing:-0.109px">o que é o AnyAcademy?</div>
  <div class="abs" style="left:519px;top:131px;width:59px;height:14.500px;border-radius:7.250px;background:#fff3e8;color:#fbc08a;font-size:7.200px;line-height:14.500px;font-weight:bold;text-align:center;letter-spacing:0.13px">INCOMPLETO</div>
  <div class="abs" style="left:604px;top:130px;width:18px;height:16px;border-radius:8px;background:#fbbb6e;color:#fff;font-size:8.400px;line-height:16px;font-weight:bold;text-align:center">3</div>
  <div class="abs" style="left:16px;top:155px;width:624px;height:31px;background:#fff;border-bottom:1px solid #cdd7e7"></div>
  <div class="abs" style="left:24px;top:162px;font-size:9.300px;line-height:14px;color:#1f2230;white-space:nowrap;letter-spacing:-0.036px">teste de gap automatico</div>
  <div class="abs" style="left:519px;top:162px;width:59px;height:14.500px;border-radius:7.250px;background:#fde6ea;color:#e8365a;font-size:7.200px;line-height:14.500px;font-weight:bold;text-align:center;letter-spacing:0.09px">INEXISTENTE</div>
  <div class="abs" style="left:604px;top:161px;width:18px;height:16px;border-radius:8px;background:#fbbb6e;color:#fff;font-size:8.400px;line-height:16px;font-weight:bold;text-align:center">2</div>
  <div class="abs" style="left:640px;top:62px;width:15px;height:140px;background:#fafafa"></div>
  <svg class="abs" style="left:643px;top:68px" width="10" height="5" viewBox="0 0 10 5"><path d="M0 5L5 0L10 5z" fill="#8a8a8a"/></svg>
  <div class="abs" style="left:643px;top:80px;width:9px;height:58px;border-radius:4.500px;background:#8b8b8b"></div>
</div>
<div class="card" style="left:880px;top:708px;width:671px;height:200px">
  <svg class="abs" style="left:15px;top:17px" width="15" height="15" viewBox="0 0 15 15" fill="none" stroke="#27ae74" stroke-width="1.100" stroke-linejoin="round" stroke-linecap="round"><path d="M7.300 3L1.800 5.900L7.300 8.800L12.800 5.900z"/><path d="M3.900 7.200v2.700L7.300 11.900l3.400-2V7.200"/><path d="M12.800 5.900v3.800"/></svg>
  <div class="ctitle" style="left:36px;top:17px;font-size:11.500px;line-height:15px;letter-spacing:-.4px">Microlearnings &amp; Impacto</div>
  <svg class="abs" style="left:642.5px;top:19px" width="12" height="12" viewBox="0 0 12 12" fill="none" stroke="#8288b8" stroke-width=".9"><circle cx="6" cy="6" r="4.800"/><path d="M6 5.300v3.200M6 3.500v.8" stroke-width="1"/></svg>
  <div class="csub" style="left:16px;top:38.600px;font-size:8.800px;line-height:12px;letter-spacing:-.118px">Conteúdos consumidos e seu impacto nos indicadores do colaborador.</div>
  <div class="abs" style="left:16px;top:62px;width:639px;height:31px;background:#f8f9fb;border-bottom:1px solid #dfe6f0"></div>
  <div class="abs" style="left:24.500px;top:68.500px;font-size:9.200px;line-height:14px;font-weight:bold;color:#161a2c;white-space:nowrap;letter-spacing:-.21px">Microlearning</div>
  <div class="abs" style="left:358.500px;top:68.500px;font-size:9.200px;line-height:14px;font-weight:bold;color:#161a2c;white-space:nowrap;letter-spacing:-.27px">Indicador</div>
  <div class="abs" style="left:618.500px;top:68.500px;font-size:9.200px;line-height:14px;font-weight:bold;color:#161a2c;white-space:nowrap;letter-spacing:-.25px">Nota</div>
  <svg class="abs" style="left:322px;top:121px" width="28" height="24" viewBox="0 0 28 24" fill="none" stroke="#c9cfdd" stroke-width="1.800" stroke-linejoin="round" stroke-linecap="round"><path d="M13.500 3.200L3 8.800L13.500 14.400L24 8.800z"/><path d="M7 11.400v5.200L13.500 20.400l6.500-3.800v-5.200"/><path d="M24 8.800v7.400"/></svg>
  <div class="abs" style="left:270.500px;top:155px;font-size:9.300px;line-height:14px;color:#a3a7c6;white-space:nowrap;letter-spacing:-.04px">Nenhum microlearning aplicado</div>
</div>
<!-- FAB -->
<div class="abs" style="left:1508px;top:836px;width:40px;height:40px;border-radius:20px;background:linear-gradient(135deg,#27b376 10%,#6f7dcc 90%);box-shadow:0 3px 18px rgba(120,120,235,.38)"></div>
<svg class="abs" style="left:1511.900px;top:839.600px" width="30" height="30" viewBox="0 0 30 30"><g transform="scale(1.220 1.140)"><path d="M14.300 6.300 Q16.600 4.300 18.300 6.900 Q20.600 11.800 21.700 19.600 Q21.900 22.600 18.600 23 Q14.400 21.400 10 23.300 Q6.400 24.400 4.200 21.600 Q2.700 18.900 5.200 15.800 Z" fill="#fff"/><path d="M8.600 22.600 Q9.600 17 14.400 14.200 Q16 13.600 17.300 15 Q19.600 17.800 20 21.600" fill="none" stroke="#4f93a8" stroke-width=".6"/></g></svg>
</body>
</html>
